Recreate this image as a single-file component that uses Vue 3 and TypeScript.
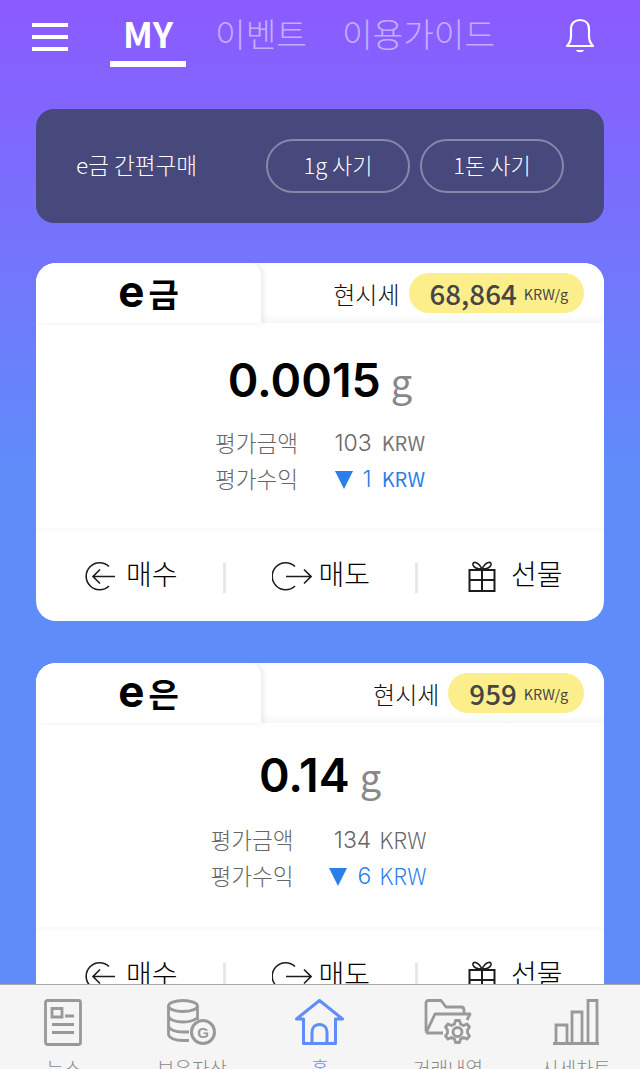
<script setup lang="ts">
interface Asset {
  name: string
  price: string
  amount: string
  value: string
  profit: string
  wide: boolean
}
const assets: Asset[] = [
  { name: '금', price: '68,864', amount: '0.0015', value: '103', profit: '1', wide: false },
  { name: '은', price: '959', amount: '0.14', value: '134', profit: '6', wide: true }
]
const navItems = [
  { key: 'news', label: '뉴스' },
  { key: 'assets', label: '보유자산' },
  { key: 'home', label: '홈' },
  { key: 'history', label: '거래내역' },
  { key: 'chart', label: '시세차트' }
]
</script>

<template>
  <div class="page">
    <header class="top">
      <div class="burger"><i></i><i></i><i></i></div>
      <nav class="tabs">
        <span class="tab active">MY</span>
        <span class="tab t2">이벤트</span>
        <span class="tab t3">이용가이드</span>
      </nav>
      <svg class="bell" viewBox="0 0 30 36" fill="none" stroke="#fff" stroke-width="2.2">
        <path d="M2 28 C5 25 6 23 6 18 V11 C6 5 10 2 15 2 C20 2 24 5 24 11 V18 C24 23 25 25 28 28 Z" stroke-linejoin="round" />
        <path d="M11 32 H19 C18 35 12 35 11 32 Z" fill="#fff" stroke="none" />
      </svg>
    </header>

    <section class="quick">
      <span class="quick-title">e금 간편구매</span>
      <div class="quick-btns">
        <span class="pill">1g 사기</span>
        <span class="pill">1돈 사기</span>
      </div>
    </section>

    <section v-for="a in assets" :key="a.name" class="card" :class="{ wide: a.wide }">
      <div class="card-head">
        <div class="metal"><b class="e">e</b><b class="kr">{{ a.name }}</b></div>
        <div class="price-box">
          <span class="price-label">현시세</span>
          <span class="price-chip"><b>{{ a.price }}</b><small>KRW/g</small></span>
        </div>
      </div>
      <div class="card-body">
        <div class="amount"><b>{{ a.amount }}</b><span>g</span></div>
        <div class="rows">
          <div class="row"><span class="k">평가금액</span><span class="v"><span class="num">{{ a.value }}</span><em>KRW</em></span></div>
          <div class="row"><span class="k">평가수익</span><span class="v down"><i class="tri"></i><span class="num">{{ a.profit }}</span><em>KRW</em></span></div>
        </div>
      </div>
      <div class="actions">
        <div class="act buy">
          <svg class="ic" viewBox="0 0 32 32" fill="none" stroke="#1c1c1c" stroke-width="1.6">
            <path d="M25 6.5 A13.5 13.5 0 1 0 25 26" />
            <path d="M31 16.5 H9 M16 9.5 L9 16.5 L16 23.5" />
          </svg>
          <span>매수</span>
        </div>
        <i class="sep"></i>
        <div class="act sell">
          <svg class="ic" viewBox="0 0 40 32" fill="none" stroke="#1c1c1c" stroke-width="1.6">
            <path d="M23 6.5 A13.5 13.5 0 1 0 23 26" />
            <path d="M14 16.5 H39 M32 9.5 L39 16.5 L32 23.5" />
          </svg>
          <span>매도</span>
        </div>
        <i class="sep"></i>
        <div class="act gift">
          <svg class="ic" viewBox="0 0 28 32" fill="none" stroke="#1c1c1c" stroke-width="2">
            <path d="M1.5 10 H26.5 V31 H1.5 Z M1.5 20 H26.5 M14 10 V31" />
            <path d="M14 9 C10 1 4 1 5 5 C6 8 10 9 14 9 C18 9 22 8 23 5 C24 1 18 1 14 9" stroke-width="1.6" />
          </svg>
          <span>선물</span>
        </div>
      </div>
    </section>

    <footer class="bottom">
      <div v-for="n in navItems" :key="n.key" class="nav" :class="{ on: n.key === 'home' }">
        <svg v-if="n.key === 'news'" viewBox="0 0 50 48" fill="none" stroke="#999" stroke-width="2.8">
          <rect x="6.5" y="1.5" width="35" height="44" rx="2" />
          <path d="M13 9.5 H23 V18 H13 Z M26 17 H35 M13 25.5 H35 M13 33.5 H35" />
        </svg>
        <svg v-else-if="n.key === 'assets'" viewBox="0 0 50 48" fill="none" stroke="#999" stroke-width="2.8">
          <ellipse cx="16" cy="7" rx="14.5" ry="5.5" />
          <path d="M1.5 7 V35 C1.5 39 8 41.5 16 41.5 H22 M30.5 7 V21 M1.5 16.5 C1.5 20.5 8 23 16 23 C22 23 27 21.5 30 19 M1.5 26.5 C1.5 30.5 8 33 16 33 H22" />
          <circle cx="36" cy="33" r="11.5" stroke-width="3" />
          <text x="36" y="38.5" text-anchor="middle" class="g">G</text>
        </svg>
        <svg v-else-if="n.key === 'home'" viewBox="0 0 50 48" fill="none" stroke="#5f8dfa" stroke-width="3">
          <path d="M8.5 20 H1.5 L24.5 1.5 L47.5 20 H40.5 V44.5 H8.5 Z" stroke-linejoin="round" />
          <path d="M17 44.5 V33 C17 23 32 23 32 33 V44.5" />
        </svg>
        <svg v-else-if="n.key === 'history'" viewBox="0 0 50 48" fill="none" stroke="#999" stroke-width="2.8">
          <path d="M3 32 V4 C3 2.5 4 1.5 5.5 1.5 H18 L23 8 H38 C40 8 41 9 41 11 V14 M3 34 L12 15 H47 L44 21 M3 34 H20" stroke-linejoin="round" />
          <path d="M32.5 21.5 h4 l1 3.5 l3 1.5 l3.5 -1.5 l2.5 3 l-2 3 v3 l2 3 l-2.5 3 l-3.5 -1.5 l-3 1.5 l-1 3.5 h-4 l-1 -3.5 l-3 -1.5 l-3.5 1.5 l-2.5 -3 l2 -3 v-3 l-2 -3 l2.5 -3 l3.5 1.5 l3 -1.5 Z" stroke-linejoin="round" />
          <circle cx="34.5" cy="33" r="4.5" />
        </svg>
        <svg v-else viewBox="0 0 50 48" fill="none" stroke="#999" stroke-width="2.8">
          <path d="M2 44.5 H48 M5 44 V26 H16 V44 M21 44 V13 H31 V44 M37 44 V1.5 H46 V44" />
        </svg>
        <span>{{ n.label }}</span>
      </div>
    </footer>
  </div>
</template>

<style>
html, body { margin: 0; padding: 0; overflow: hidden; }
</style>

<style scoped>
.page {
  width: 640px;
  height: 1069px;
  overflow: hidden;
  position: relative;
  background: linear-gradient(180deg, #8c5aff 0, #5f8cf9 470px, #5f8cf9 100%);
  font-family: "Noto Sans CJK KR", "Noto Sans", sans-serif;
  box-sizing: border-box;
}
.top {
  height: 109px;
  box-sizing: border-box;
  padding: 23px 45px 0 32px;
  display: flex;
  align-items: flex-start;
}
.burger { width: 36px; display: flex; flex-direction: column; gap: 8px; }
.burger i { display: block; height: 4px; background: #fff; }
.tabs { display: flex; margin-left: 42px; }
.tab {
  font-size: 33.3px;
  line-height: 38px;
  margin-top: -9px;
  color: rgba(255, 255, 255, 0.5);
  font-weight: 300;
  white-space: nowrap;
}
.tab.active {
  width: 76px;
  height: 53px;
  box-sizing: border-box;
  text-align: center;
  color: #fff;
  font-size: 35px;
  font-weight: 700;
  border-bottom: 6px solid #fff;
}
.t2 { margin-left: 29px; }
.t3 { margin-left: 35px; }
.bell { width: 30px; height: 36px; margin-left: auto; margin-top: -5px; }

.quick {
  margin: 0 36px;
  height: 114px;
  border-radius: 18px;
  background: #47487b;
  display: flex;
  align-items: center;
  justify-content: space-between;
  padding: 0 40px;
  color: #fff;
  box-sizing: border-box;
}
.quick-title { font-size: 22.6px; font-weight: 300; margin-top: -4px; }
.quick-btns { display: flex; gap: 10px; }
.pill {
  width: 144px;
  height: 54px;
  box-sizing: border-box;
  border: 2px solid rgba(255, 255, 255, 0.35);
  border-radius: 27px;
  display: flex;
  align-items: center;
  justify-content: center;
  font-size: 22px;
  font-weight: 300;
  padding-bottom: 4px;
}

.card {
  margin: 40px 36px 0;
  height: 358px;
  background: #fff;
  border-radius: 20px;
  display: flex;
  flex-direction: column;
  overflow: hidden;
}
.card.wide { margin-top: 42px; }
.card-head {
  height: 60px;
  display: flex;
  background: linear-gradient(180deg, #fff 85%, #f7f7f7 100%);
}
.metal {
  width: 225px;
  height: 60px;
  background: #fff;
  border-radius: 0 12px 0 0;
  box-shadow: 3px 0 5px rgba(0, 0, 0, 0.07);
  display: flex;
  align-items: center;
  justify-content: center;
  gap: 4px;
  color: #000;
}
.metal .e { font-size: 44px; line-height: 46px; font-family: Inter, sans-serif; font-weight: 700; padding-bottom: 4px; }
.metal .kr { font-size: 33px; line-height: 46px; font-weight: 700; }
.price-box { flex: 1; display: flex; align-items: center; justify-content: flex-end; padding: 0 20px 0 0; gap: 9px; }
.price-label { font-size: 24px; color: #111; font-weight: 300; }
.price-chip {
  height: 40px;
  box-sizing: border-box;
  padding: 0 16px 0 21px;
  border-radius: 20px;
  background: #fdee8c;
  display: flex;
  align-items: center;
  gap: 7px;
  color: #454545;
}
.price-chip b { font-size: 27.7px; font-weight: 500; line-height: 38px; }
.price-chip small { font-size: 14.4px; font-weight: 400; }
.card-body {
  height: 208px;
  flex: none;
  box-sizing: border-box;
  border-bottom: 3px solid #fafafa;
  display: flex;
  flex-direction: column;
  align-items: center;
  padding-top: 26px;
}
.wide .card-body { padding-top: 21px; height: 207px; }
.amount { display: flex; align-items: baseline; gap: 10px; height: 62px; }
.amount b { font-family: Inter, sans-serif; font-size: 46.5px; font-weight: 600; color: #000; line-height: 62px; }
.amount span { font-size: 38px; color: #888; line-height: 62px; }
.rows { display: flex; flex-direction: column; margin-top: 13px; }
.wide .rows { margin-top: 15px; }
.row { display: flex; align-items: center; height: 36px; }
.k { font-size: 22.6px; font-weight: 300; color: #666; width: 82px; white-space: nowrap; }
.v { width: 128px; font-size: 23px; color: #666; font-weight: 300; display: flex; align-items: center; justify-content: flex-end; white-space: nowrap; }
.wide .row { margin-left: -3px; }
.wide .v { width: 134px; }
.num { font-family: Inter, sans-serif; margin: 2px 10px 0 0; }
.wide .num { margin-right: 8px; }
.v em { font-style: normal; font-size: 20px; font-weight: 400; color: #777; }
.wide .v em { font-size: 22.5px; font-weight: 300; color: #666; }
.v.down, .v.down em { color: #2c7fe8; }
.tri {
  width: 0;
  height: 0;
  border-left: 9px solid transparent;
  border-right: 9px solid transparent;
  border-top: 18px solid #2c7fe8;
  margin: 3px 10px 0 0;
}
.actions { flex: 1; display: flex; align-items: center; padding: 0 0 0 48px; }
.act { display: flex; align-items: center; font-size: 28px; color: #000; font-weight: 300; line-height: 40px; flex: none; }
.act span { margin-top: -6px; }
.ic { width: 32px; height: 32px; flex: none; }
.buy { gap: 10px; }
.sell { gap: 7px; margin-left: 46px; }
.sell .ic { width: 40px; }
.gift { gap: 15px; margin-left: 50px; }
.gift .ic { width: 28px; }
.sep { width: 3px; height: 30px; background: #e8e8e8; margin: 4px 0 0 45px; flex: none; }

.bottom {
  position: absolute;
  left: 0;
  right: 0;
  bottom: 0;
  height: 85px;
  background: #f5f5f5;
  border-top: 1px solid #aaa;
  display: grid;
  grid-template-columns: repeat(5, 1fr);
  box-sizing: border-box;
  overflow: hidden;
}
.nav { display: flex; flex-direction: column; align-items: center; padding-top: 14px; color: #888; font-size: 19px; font-weight: 300; }
.nav svg { width: 50px; height: 48px; flex: none; }
.nav span { line-height: 28px; margin-top: 7px; white-space: nowrap; }
.nav.on { color: #5f8dfa; }
.g { font-size: 15px; font-weight: 700; fill: #999; stroke: none; font-family: "Liberation Sans", sans-serif; }
</style>
